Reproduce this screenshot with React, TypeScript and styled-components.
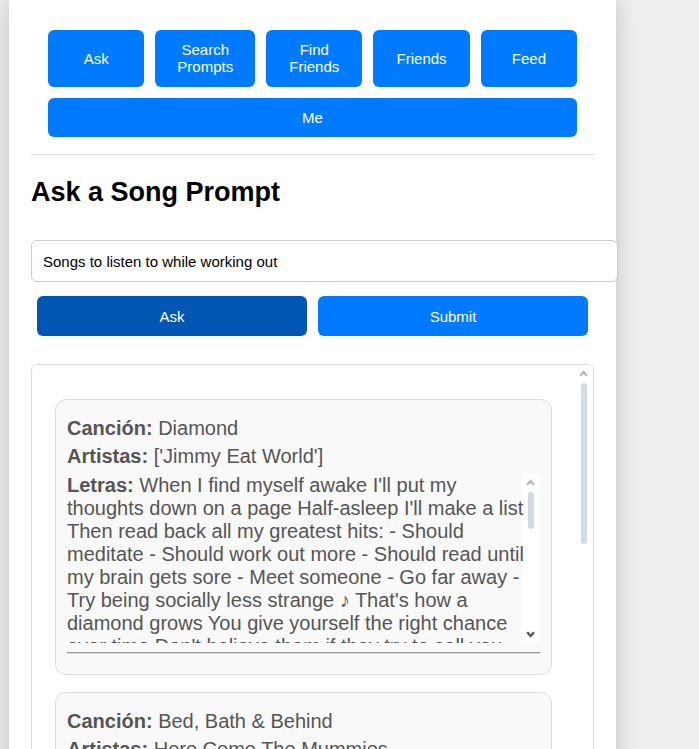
import React, { useState } from "react";
import styled, { createGlobalStyle } from "styled-components";

const GlobalStyle = createGlobalStyle`
  body {
    margin: 0;
    background: #efefef;
    font-family: "Liberation Sans", Arial, Helvetica, sans-serif;
    color: #000;
  }
`;

const Page = styled.div`
  height: 100vh;
  overflow: hidden;
  display: flex;
  padding: 0 83px 0 9px;
  box-sizing: border-box;
`;

const Panel = styled.main`
  flex: 1;
  min-width: 0;
  min-height: 100%;
  height: max-content;
  box-sizing: border-box;
  padding: 13px 22px;
  background: #fff;
  box-shadow: 0 0 22px rgba(0, 0, 0, 0.2);
`;

const Nav = styled.nav`
  display: flex;
  flex-wrap: wrap;
  gap: 11px;
  padding: 17px;
  border-bottom: 1px solid #ddd;
`;

const Button = styled.button<{ $active?: boolean }>`
  flex: 1 1 90px;
  box-sizing: border-box;
  padding: 11px 22px;
  border: 0;
  border-radius: 6px;
  background: ${(p) => (p.$active ? "#0056b3" : "#007bff")};
  color: #fff;
  font-family: inherit;
  font-size: 15px;
  line-height: 17px;
  cursor: pointer;
`;

const NavButton = styled(Button)`
  padding: 11px 22px 12px;
`;

const Title = styled.h1`
  margin: 21px 0 31px;
  font-size: 27px;
  line-height: 33px;
  font-weight: bold;
`;

const PromptInput = styled.input`
  display: block;
  box-sizing: content-box;
  width: 100%;
  height: 18px;
  padding: 11px;
  border: 1px solid #ccc;
  border-radius: 6px;
  background: #fff;
  color: #000;
  font-family: inherit;
  font-size: 15px;
  outline: none;
`;

const Actions = styled.div`
  display: flex;
  gap: 11px;
  padding: 14px 6px 28px;

  ${Button} {
    min-height: 40px;
  }
`;

const Results = styled.section`
  display: flex;
  height: 560px;
  border: 1px solid #ddd;
  border-radius: 6px;
  overflow: hidden;
`;

const SongList = styled.div`
  flex: 1;
  min-width: 0;
  display: flex;
  flex-direction: column;
  gap: 17px;
  padding: 34px 23px;
  overflow: hidden;
`;

const Card = styled.article`
  flex: none;
  padding: 17px 11px 20px;
  border: 1px solid #ddd;
  border-radius: 11px;
  background: #f9f9f9;
  color: #555;
  font-size: 20px;
  line-height: 23px;
`;

const Field = styled.p`
  margin: 0 0 5px;
`;

const Lyrics = styled.div`
  display: flex;
  height: 169px;
  margin: 6px 0 9px;
  overflow: hidden;
`;

const LyricsText = styled.p`
  flex: 1;
  z-index: 1;
  min-width: 0;
  margin: 0;
  white-space: pre;
`;

const Rule = styled.hr`
  margin: 0;
  border: 0;
  border-top: 1px solid #9a9a9a;
  border-bottom: 1px solid #ddd;
`;

const Track = styled.div`
  flex: none;
  display: flex;
  flex-direction: column;
  align-items: center;
  width: 18px;
  background: #fff;
`;

const Thumb = styled.div<{ $size: number }>`
  width: 6px;
  height: ${(p) => p.$size}px;
  border-radius: 3px;
  background: #d0dbe3;
`;

const ArrowSlot = styled.svg`
  flex: none;
  display: block;
  width: 18px;
  height: 18px;
  fill: none;
  stroke-width: 2;
`;

const Spacer = styled.div`
  flex: 1;
`;

function Scrollbar({ thumb }: { thumb: number }) {
  return (
    <Track aria-hidden="true">
      <ArrowSlot viewBox="0 0 18 18">
        <path d="M5.2 10.8 L8.6 7 L12 10.8" stroke="#b9b9b9" strokeWidth="2.4" />
      </ArrowSlot>
      <Thumb $size={thumb} />
      <Spacer />
      <ArrowSlot viewBox="0 0 18 18">
        <path d="M5.2 7.2 L8.6 11 L12 7.2" stroke="#555" strokeWidth="2.4" />
      </ArrowSlot>
    </Track>
  );
}

const links = ["Ask", "Search Prompts", "Find Friends", "Friends", "Feed", "Me"];

type Song = { title: string; artists: string; lyrics?: string[] };

const songs: Song[] = [
  {
    title: "Diamond",
    artists: "['Jimmy Eat World']",
    lyrics: [
      "When I find myself awake I'll put my",
      "thoughts down on a page Half-asleep I'll make a list",
      "Then read back all my greatest hits: - Should",
      "meditate - Should work out more - Should read until",
      "my brain gets sore - Meet someone - Go far away -",
      "Try being socially less strange ♪ That's how a",
      "diamond grows You give yourself the right chance",
      "over time Don't believe them if they try to sell you",
    ],
  },
  { title: "Bed, Bath & Behind", artists: "Here Come The Mummies" },
];

export default function App() {
  const [prompt, setPrompt] = useState("Songs to listen to while working out");

  return (
    <>
      <GlobalStyle />
      <Page>
        <Panel>
          <Nav>
            {links.map((label) =>
              label === "Me" ? (
                <Button key={label} type="button">
                  {label}
                </Button>
              ) : (
                <NavButton key={label} type="button">
                  {label}
                </NavButton>
              )
            )}
          </Nav>
          <Title>Ask a Song Prompt</Title>
          <form onSubmit={(e) => e.preventDefault()}>
            <PromptInput
              type="text"
              aria-label="Song prompt"
              value={prompt}
              onChange={(e) => setPrompt(e.target.value)}
            />
            <Actions>
              <Button type="button" $active>
                Ask
              </Button>
              <Button type="submit">Submit</Button>
            </Actions>
          </form>
          <Results>
            <SongList>
              {songs.map((song) => (
                <Card key={song.title}>
                  <Field>
                    <strong>Canción:</strong> {song.title}
                  </Field>
                  <Field>
                    <strong>Artistas:</strong> {song.artists}
                  </Field>
                  {song.lyrics && (
                    <Lyrics>
                      <LyricsText>
                        <strong>Letras:</strong> {song.lyrics.join("\n")}
                      </LyricsText>
                      <Scrollbar thumb={37} />
                    </Lyrics>
                  )}
                  <Rule />
                </Card>
              ))}
            </SongList>
            <Scrollbar thumb={161} />
          </Results>
        </Panel>
      </Page>
    </>
  );
}
